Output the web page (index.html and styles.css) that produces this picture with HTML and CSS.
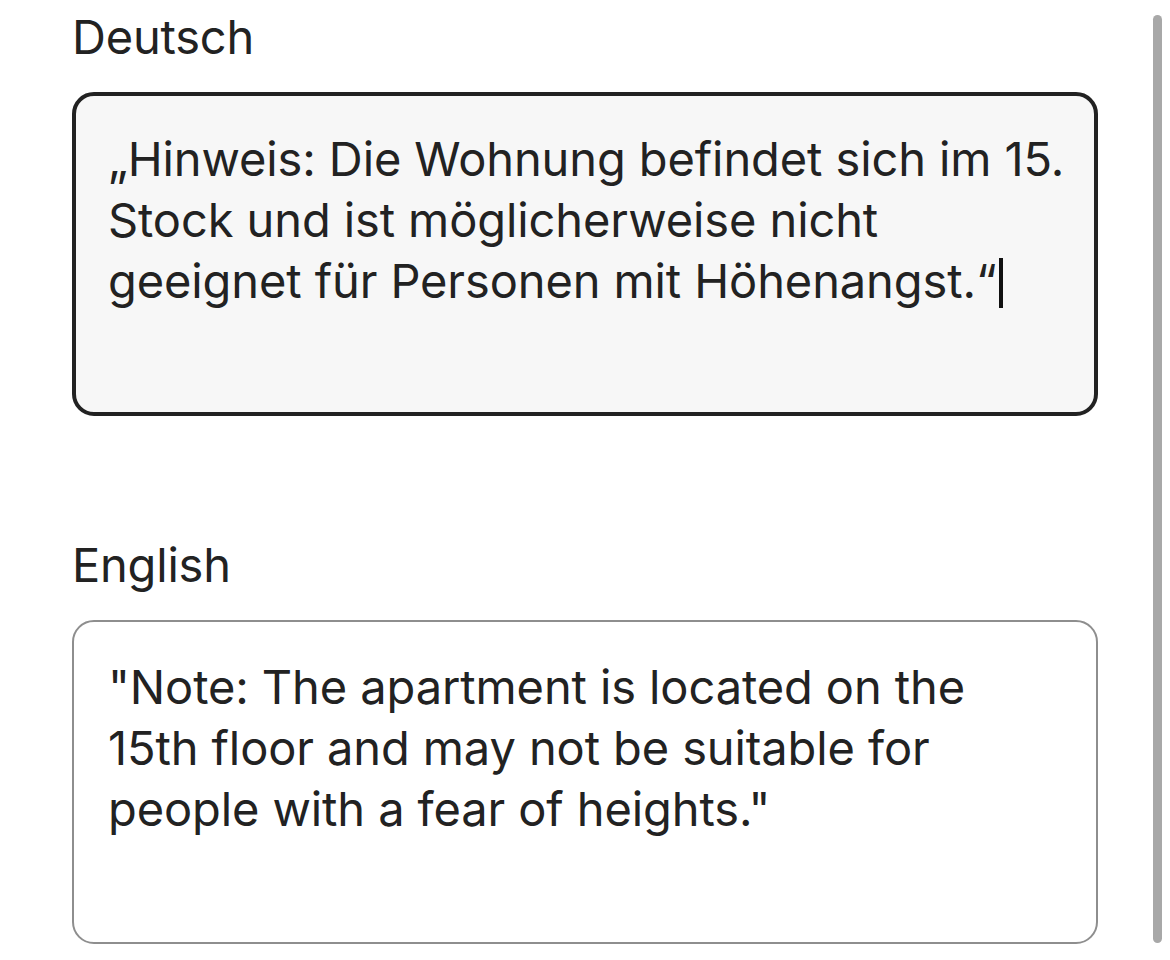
FILE: index.html
```html
<!DOCTYPE html>
<html lang="de">
<head>
<meta charset="utf-8">
<link rel="stylesheet" href="styles.css">
</head>
<body>
<div class="page">
  <main class="content">
    <section class="field">
      <div class="label">Deutsch</div>
      <div class="box box-active">„Hinweis: Die Wohnung befindet sich im 15.<br>Stock und ist möglicherweise nicht<br>geeignet für Personen mit Höhenangst.“<span class="caret"></span></div>
    </section>
    <section class="field field-second">
      <div class="label">English</div>
      <div class="box box-plain">"Note: The apartment is located on the<br>15th floor and may not be suitable for<br>people with a fear of heights."</div>
    </section>
  </main>
  <div class="scrollbar"></div>
</div>
</body>
</html>
```
FILE: styles.css
```css
html, body {
  margin: 0;
  padding: 0;
  background: #ffffff;
}
body {
  font-family: Inter, "Noto Sans", "Liberation Sans", sans-serif;
  color: #222222;
}
.page {
  display: flex;
  align-items: flex-start;
  width: 1170px;
  height: 960px;
  box-sizing: border-box;
  padding: 0 0 0 72px;
}
.content {
  width: 1026px;
  display: flex;
  flex-direction: column;
}
.label {
  font-size: 47px;
  line-height: 74px;
  letter-spacing: -0.2px;
  margin-bottom: 18px;
}
.field-second {
  margin-top: 112px;
}
.box {
  box-sizing: border-box;
  height: 324px;
  border-radius: 22px;
  padding: 32px 6px 0 32px;
  font-size: 47px;
  line-height: 61px;
  letter-spacing: -0.1px;
  white-space: nowrap;
}
.box-active {
  border: 4px solid #222222;
  background: #f7f7f7;
}
.box-plain {
  border: 2px solid #8e8e8e;
  background: #ffffff;
  padding-left: 34px;
  padding-top: 34px;
}
.caret {
  display: inline-block;
  width: 4px;
  height: 50px;
  background: #111111;
  vertical-align: -10px;
  margin-left: 2px;
}
.scrollbar {
  width: 9px;
  height: 928px;
  margin: 15px 0 0 55px;
  border-radius: 5px;
  background: #a8a8a8;
}
```
